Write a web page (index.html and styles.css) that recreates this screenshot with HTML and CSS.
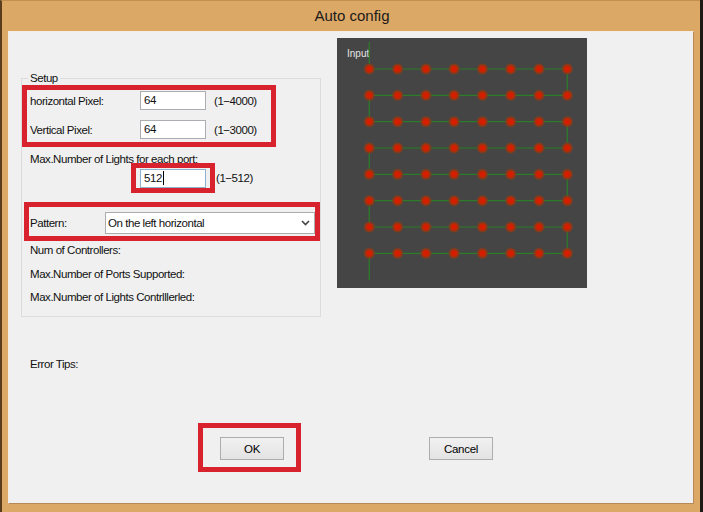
FILE: index.html
```html
<!DOCTYPE html>
<html>
<head>
<meta charset="utf-8">
<link rel="stylesheet" href="styles.css">
</head>
<body>
<div class="window">
  <div class="titlebar">Auto config</div>
  <div class="client">
    <div class="top">
      <div class="left">
        <div class="group">
          <span class="legend">Setup</span>
          <div class="row r1">
            <span class="lbl">horizontal Pixel:</span>
            <div class="textbox">64</div>
            <span class="range">(1−4000)</span>
          </div>
          <div class="row r2">
            <span class="lbl">Vertical Pixel:</span>
            <div class="textbox">64</div>
            <span class="range">(1−3000)</span>
          </div>
          <div class="line l-max">Max.Number of Lights for each port:</div>
          <div class="row r3">
            <div class="textbox focused">512<span class="caret"></span></div>
            <span class="range wide">(1−512)</span>
          </div>
          <div class="row r4">
            <span class="lbl short">Pattern:</span>
            <div class="combo">
              <span>On the left horizontal</span>
              <svg class="chev" width="9" height="6" viewBox="0 0 9 6"><path d="M1 1 L4.5 4.5 L8 1" fill="none" stroke="#444" stroke-width="1.6"/></svg>
            </div>
          </div>
          <div class="line l1">Num of Controllers:</div>
          <div class="line l2">Max.Number of Ports Supported:</div>
          <div class="line l3">Max.Number of Lights Contrlllerled:</div>
        </div>
      </div>
      <div class="panel">
        <svg width="250" height="250" viewBox="0 0 250 250">
          <defs>
            <radialGradient id="dot">
              <stop offset="0" stop-color="#e01800"/>
              <stop offset="0.4" stop-color="#cc2200"/>
              <stop offset="0.7" stop-color="#8e3a16" stop-opacity="0.85"/>
              <stop offset="1" stop-color="#5a4030" stop-opacity="0"/>
            </radialGradient>
          </defs>
          <text x="10" y="19" class="inlabel">Input</text>
          <path d="M32.3 4 V31 H230.3 V57.3 H32.3 V83.7 H230.3 V110 H32.3 V136.3 H230.3 V162.7 H32.3 V189 H230.3 V215.3 H32.3 V242" fill="none" stroke="#2b7d2b" stroke-width="1.2"/>
          <g fill="url(#dot)">
            <circle cx="32.3" cy="31" r="6.5"/><circle cx="60.6" cy="31" r="6.5"/><circle cx="88.9" cy="31" r="6.5"/><circle cx="117.1" cy="31" r="6.5"/><circle cx="145.4" cy="31" r="6.5"/><circle cx="173.7" cy="31" r="6.5"/><circle cx="202" cy="31" r="6.5"/><circle cx="230.3" cy="31" r="6.5"/>
            <circle cx="32.3" cy="57.3" r="6.5"/><circle cx="60.6" cy="57.3" r="6.5"/><circle cx="88.9" cy="57.3" r="6.5"/><circle cx="117.1" cy="57.3" r="6.5"/><circle cx="145.4" cy="57.3" r="6.5"/><circle cx="173.7" cy="57.3" r="6.5"/><circle cx="202" cy="57.3" r="6.5"/><circle cx="230.3" cy="57.3" r="6.5"/>
            <circle cx="32.3" cy="83.7" r="6.5"/><circle cx="60.6" cy="83.7" r="6.5"/><circle cx="88.9" cy="83.7" r="6.5"/><circle cx="117.1" cy="83.7" r="6.5"/><circle cx="145.4" cy="83.7" r="6.5"/><circle cx="173.7" cy="83.7" r="6.5"/><circle cx="202" cy="83.7" r="6.5"/><circle cx="230.3" cy="83.7" r="6.5"/>
            <circle cx="32.3" cy="110" r="6.5"/><circle cx="60.6" cy="110" r="6.5"/><circle cx="88.9" cy="110" r="6.5"/><circle cx="117.1" cy="110" r="6.5"/><circle cx="145.4" cy="110" r="6.5"/><circle cx="173.7" cy="110" r="6.5"/><circle cx="202" cy="110" r="6.5"/><circle cx="230.3" cy="110" r="6.5"/>
            <circle cx="32.3" cy="136.3" r="6.5"/><circle cx="60.6" cy="136.3" r="6.5"/><circle cx="88.9" cy="136.3" r="6.5"/><circle cx="117.1" cy="136.3" r="6.5"/><circle cx="145.4" cy="136.3" r="6.5"/><circle cx="173.7" cy="136.3" r="6.5"/><circle cx="202" cy="136.3" r="6.5"/><circle cx="230.3" cy="136.3" r="6.5"/>
            <circle cx="32.3" cy="162.7" r="6.5"/><circle cx="60.6" cy="162.7" r="6.5"/><circle cx="88.9" cy="162.7" r="6.5"/><circle cx="117.1" cy="162.7" r="6.5"/><circle cx="145.4" cy="162.7" r="6.5"/><circle cx="173.7" cy="162.7" r="6.5"/><circle cx="202" cy="162.7" r="6.5"/><circle cx="230.3" cy="162.7" r="6.5"/>
            <circle cx="32.3" cy="189" r="6.5"/><circle cx="60.6" cy="189" r="6.5"/><circle cx="88.9" cy="189" r="6.5"/><circle cx="117.1" cy="189" r="6.5"/><circle cx="145.4" cy="189" r="6.5"/><circle cx="173.7" cy="189" r="6.5"/><circle cx="202" cy="189" r="6.5"/><circle cx="230.3" cy="189" r="6.5"/>
            <circle cx="32.3" cy="215.3" r="6.5"/><circle cx="60.6" cy="215.3" r="6.5"/><circle cx="88.9" cy="215.3" r="6.5"/><circle cx="117.1" cy="215.3" r="6.5"/><circle cx="145.4" cy="215.3" r="6.5"/><circle cx="173.7" cy="215.3" r="6.5"/><circle cx="202" cy="215.3" r="6.5"/><circle cx="230.3" cy="215.3" r="6.5"/>
          </g>
        </svg>
      </div>
    </div>
    <div class="line errtips">Error Tips:</div>
    <div class="buttons">
      <button class="btn">OK</button>
      <button class="btn cancel">Cancel</button>
    </div>
  </div>
</div>
<div class="mark m1"></div>
<div class="mark m2"></div>
<div class="mark m3"></div>
<div class="mark m4"></div>
</body>
</html>
```
FILE: styles.css
```css
html, body {
  margin: 0;
  padding: 0;
}
body {
  width: 703px;
  height: 512px;
  background: #1e1a16;
  position: relative;
  overflow: hidden;
  font-family: "Liberation Sans", Arial, sans-serif;
  font-size: 11.5px;
  letter-spacing: -0.45px;
  color: #111;
}
.window {
  box-sizing: border-box;
  width: 700px;
  height: 512px;
  background: #dca866;
  border-left: 2px solid #5a3c1e;
  border-top: 1px solid #c3904f;
  display: flex;
  flex-direction: column;
}
.titlebar {
  height: 30px;
  line-height: 30px;
  text-align: center;
  font-size: 15px;
  letter-spacing: 0;
  color: #1b1b1b;
  padding-left: 2px;
}
.client {
  box-sizing: border-box;
  margin: 0 6px;
  height: 473px;
  background: #f0f0f0;
  border: 1px solid #b88a58;
  border-top-color: #f6ecdf;
  border-left-color: #f6ecdf;
  display: flex;
  flex-direction: column;
}
.top {
  display: flex;
  padding: 6px 0 0 12px;
}
.left {
  width: 300px;
  margin-top: 40px;
}
.group {
  box-sizing: border-box;
  border: 1px solid #dcdcdc;
  padding: 0 0 12px 8px;
  display: flex;
  flex-direction: column;
}
.legend {
  display: block;
  width: max-content;
  height: 13px;
  line-height: 13px;
  margin: -7px 0 0 -2px;
  padding: 0 2px;
  background: #f0f0f0;
}
.row {
  display: flex;
  align-items: center;
}
.r1 { height: 21px; margin-top: 5px; }
.r2 { height: 21px; margin-top: 8px; }
.r3 { height: 20px; margin-top: 2px; padding-left: 110px; }
.r4 { height: 23px; margin-top: 23px; }
.lbl {
  width: 110px;
  flex: none;
}
.lbl.short { width: 75px; }
.line {
  height: 14px;
  line-height: 14px;
}
.l-max { margin-top: 12px; }
.l1 { margin-top: 9px; }
.l2 { margin-top: 10px; }
.l3 { margin-top: 9px; }
.textbox {
  box-sizing: border-box;
  width: 66px;
  height: 19px;
  line-height: 17px;
  padding-left: 3px;
  background: #fff;
  border: 1px solid #abadb3;
  display: flex;
  align-items: center;
}
.textbox.focused {
  height: 19px;
  border-color: #8fb1d0;
}
.caret {
  display: inline-block;
  width: 1px;
  height: 14px;
  background: #000;
  margin-left: 1px;
}
.range { margin-left: 8px; }
.range.wide { margin-left: 10px; }
.combo {
  box-sizing: border-box;
  width: 210px;
  height: 22px;
  background: #fff;
  border: 1px solid #acacac;
  display: flex;
  align-items: center;
  justify-content: space-between;
  padding: 0 4px 0 2px;
}
.chev { display: block; }
.panel {
  margin-left: 16px;
  width: 250px;
  height: 250px;
  background: #454545;
}
.panel svg { display: block; }
.inlabel {
  font-family: "Liberation Sans", Arial, sans-serif;
  font-size: 10px;
  fill: #e6e6e6;
  letter-spacing: 0;
}
.errtips {
  margin: 40px 0 0 21px;
}
.buttons {
  display: flex;
  margin: 66px 0 0 211px;
  gap: 145px;
}
.btn {
  box-sizing: border-box;
  width: 64px;
  height: 23px;
  margin: 0;
  padding: 0;
  font-family: "Liberation Sans", Arial, sans-serif;
  font-size: 11.5px;
  letter-spacing: -0.3px;
  color: #000;
  background: linear-gradient(#f1f1f1, #e3e3e3);
  border: 1px solid #adadad;
  border-radius: 0;
}
.mark {
  position: absolute;
  box-sizing: border-box;
  border: 5px solid #d8222d;
}
.m1 { left: 22px; top: 85px; width: 254px; height: 62px; }
.m2 { left: 131px; top: 163px; width: 84px; height: 30px; }
.m3 { left: 24px; top: 202px; width: 296px; height: 39px; }
.m4 { left: 198px; top: 423px; width: 103px; height: 49px; }
```
